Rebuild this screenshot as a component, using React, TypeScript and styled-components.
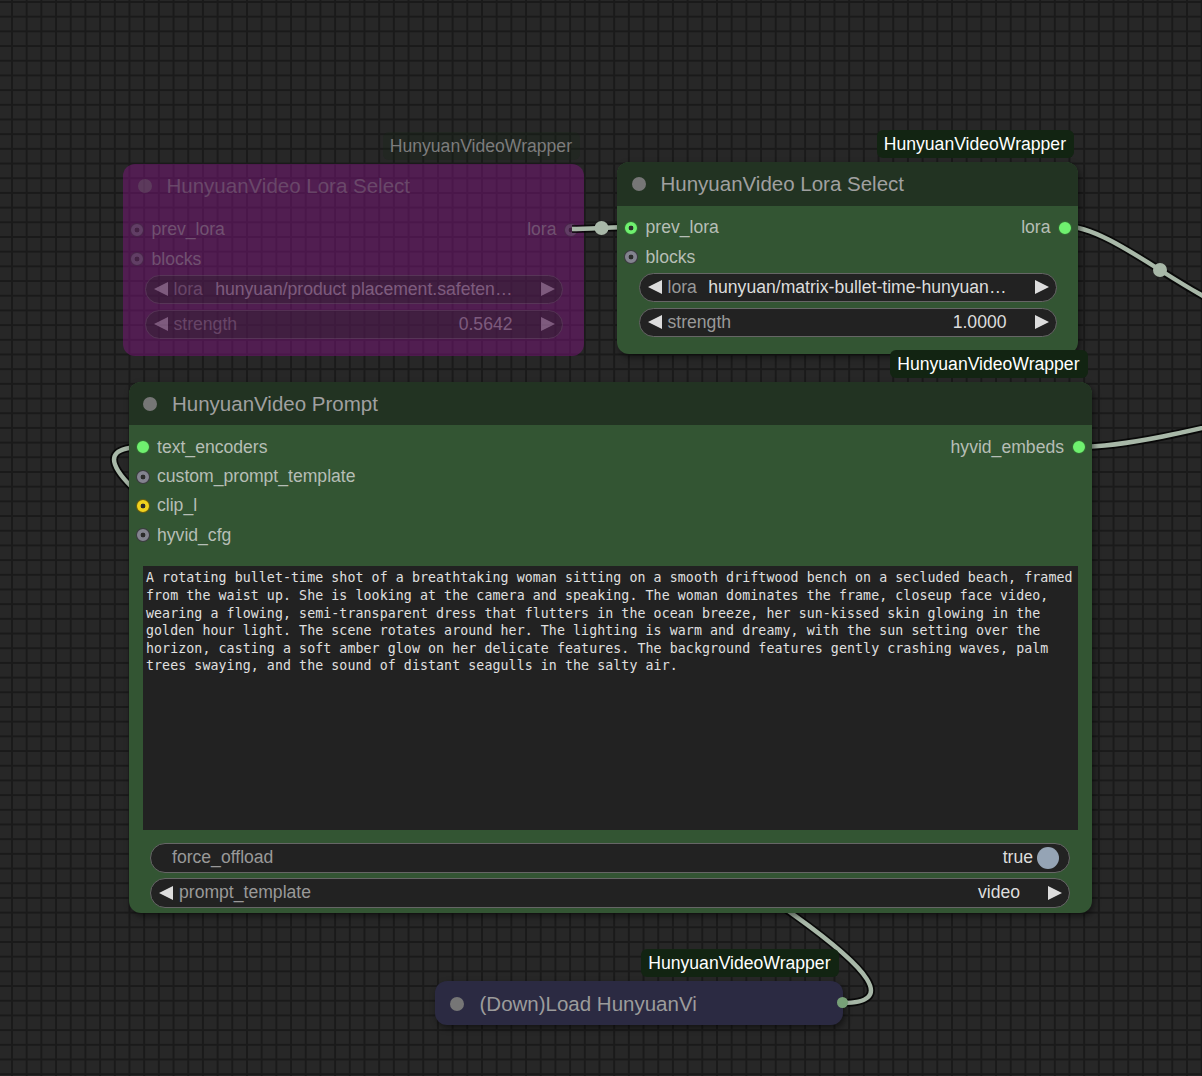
import React from 'react';
import styled, { createGlobalStyle } from 'styled-components';

const GlobalStyle = createGlobalStyle`
  html, body {
    margin: 0;
    padding: 0;
    background: #262626;
    overflow: hidden;
  }
  body {
    font-family: "Liberation Sans", Arial, sans-serif;
  }
`;

const Canvas = styled.div`
  position: relative;
  width: 1202px;
  height: 1076px;
  overflow: hidden;
  background-color: #272727;
  background-image:
    linear-gradient(to right, #1a1a1a 0, #1a1a1a 2px, transparent 2px),
    linear-gradient(to bottom, #1a1a1a 0, #1a1a1a 2px, transparent 2px);
  background-size: 14.7px 14.7px;
  background-position: 11px 1px;
  font-family: "Liberation Sans", Arial, sans-serif;
`;

const Node = styled.div<{ $x: number; $y: number; $w: number; $bg: string; $shadow?: boolean }>`
  position: absolute;
  left: ${(p) => p.$x}px;
  top: ${(p) => p.$y}px;
  width: ${(p) => p.$w}px;
  background: ${(p) => p.$bg};
  border-radius: 12px;
  display: flex;
  flex-direction: column;
  box-shadow: ${(p) => (p.$shadow === false ? 'none' : '2px 3px 6px rgba(0, 0, 0, 0.5)')};
`;

const Faded = styled.div`
  display: flex;
  flex-direction: column;
  opacity: 0.32;
`;

const Badge = styled.div<{ $faded?: boolean }>`
  position: absolute;
  right: 4px;
  bottom: calc(100% + 4px);
  height: 28px;
  line-height: 28px;
  padding: 0 8px 0 7px;
  border-radius: 6px;
  background: ${(p) => (p.$faded ? 'rgba(19, 38, 19, 0.25)' : '#122412')};
  color: ${(p) => (p.$faded ? '#7c7c7c' : '#ffffff')};
  font-size: 17.6px;
  white-space: nowrap;
`;

const TitleBar = styled.div<{ $bg?: string }>`
  height: 43.5px;
  box-sizing: border-box;
  padding-top: 1px;
  display: flex;
  align-items: center;
  gap: 15px;
  padding-left: 14.5px;
  background: ${(p) => p.$bg ?? 'transparent'};
  border-radius: 12px 12px 0 0;
  font-size: 20.5px;
  color: #a0a0a0;
  white-space: nowrap;
`;

const CollapsedBar = styled(TitleBar)`
  height: 44px;
  border-radius: 12px;
  padding-left: 15px;
  gap: 15.5px;
  color: #9c9c9c;
`;

const TitleDot = styled.span`
  width: 14px;
  height: 14px;
  border-radius: 50%;
  background: #767676;
  flex: none;
`;

const SlotList = styled.div`
  display: flex;
  flex-direction: column;
  padding-top: 7.5px;
`;

const SlotRow = styled.div`
  height: 29.4px;
  display: flex;
  align-items: center;
  justify-content: space-between;
  padding: 0 6px 0 7px;
`;

const SlotSide = styled.div`
  display: flex;
  align-items: center;
  gap: 7.5px;
`;

const SlotLabel = styled.span`
  font-size: 17.6px;
  color: #b6beb6;
  white-space: nowrap;
`;

const SlotDot = styled.span<{ $color: string; $ring?: boolean }>`
  width: 14px;
  height: 14px;
  border-radius: 50%;
  flex: none;
  box-sizing: border-box;
  border: 1px solid rgba(0, 0, 0, 0.55);
  background: ${(p) =>
    p.$ring
      ? `radial-gradient(circle, #2c2c2c 0, #2c2c2c 2.1px, ${p.$color} 2.7px)`
      : p.$color};
`;

const WidgetList = styled.div<{ $top: number; $bottom: number }>`
  display: flex;
  flex-direction: column;
  gap: 5.6px;
  padding: ${(p) => p.$top}px 21.5px ${(p) => p.$bottom}px 21.5px;
`;

const Widget = styled.div`
  height: 29.4px;
  box-sizing: border-box;
  border: 1px solid #666;
  border-radius: 15px;
  background: #222;
  display: flex;
  align-items: center;
  padding: 0 7px 0 8px;
  font-size: 17.6px;
  white-space: nowrap;
`;

const ToggleWidget = styled(Widget)`
  padding: 0 10px 0 21px;
`;

const Arrow = styled.span<{ $dir: 'left' | 'right' }>`
  width: 0;
  height: 0;
  flex: none;
  border-top: 7.35px solid transparent;
  border-bottom: 7.35px solid transparent;
  ${(p) =>
    p.$dir === 'left' ? 'border-right: 14.7px solid #dddddd;' : 'border-left: 14.7px solid #dddddd;'}
`;

const WLabel = styled.span<{ $grow?: boolean }>`
  margin-left: ${(p) => (p.$grow ? '0' : '6px')};
  color: #999;
  flex: ${(p) => (p.$grow ? '1' : 'none')};
`;

const WValue = styled.span`
  flex: 1;
  text-align: right;
  color: #ddd;
  margin: 0 28px 0 9px;
  overflow: hidden;
  text-overflow: ellipsis;
`;

const ToggleValue = styled.span`
  color: #ddd;
  margin-right: 4px;
`;

const ToggleKnob = styled.span`
  width: 22px;
  height: 22px;
  border-radius: 50%;
  background: #95a4b5;
  flex: none;
`;

const PromptText = styled.div`
  margin: 15.9px 13.5px 0 14.5px;
  height: 264px;
  box-sizing: border-box;
  padding: 3.5px 3px 2px;
  background: #222;
  color: #e0e0e0;
  font-family: "DejaVu Sans Mono", "Liberation Mono", monospace;
  font-size: 13.25px;
  letter-spacing: 0.08px;
  line-height: 17.6px;
  white-space: pre;
  overflow: hidden;
`;

const OutputNub = styled.span`
  position: absolute;
  right: -5px;
  top: 50%;
  width: 11px;
  height: 11px;
  margin-top: -6px;
  border-radius: 50%;
  background: #77a077;
`;

const Wires = styled.svg`
  position: absolute;
  left: 0;
  top: 0;
  width: 1202px;
  height: 1076px;
  overflow: visible;
  pointer-events: none;
`;

const GREEN = '#6ff06f';
const GREY = '#83838f';
const YELLOW = '#f0d21e';
const WIRE = '#a8b8a8';

const prompt = [
  'A rotating bullet-time shot of a breathtaking woman sitting on a smooth driftwood bench on a secluded beach, framed',
  'from the waist up. She is looking at the camera and speaking. The woman dominates the frame, closeup face video,',
  'wearing a flowing, semi-transparent dress that flutters in the ocean breeze, her sun-kissed skin glowing in the',
  'golden hour light. The scene rotates around her. The lighting is warm and dreamy, with the sun setting over the',
  'horizon, casting a soft amber glow on her delicate features. The background features gently crashing waves, palm',
  'trees swaying, and the sound of distant seagulls in the salty air.',
].join('\n');

type ComboProps = { label: string; value: string };
const Combo: React.FC<ComboProps> = ({ label, value }) => (
  <Widget>
    <Arrow $dir="left" />
    <WLabel>{label}</WLabel>
    <WValue>{value}</WValue>
    <Arrow $dir="right" />
  </Widget>
);

const links = [
  { d: 'M572 229 C587 229, 616 227, 631 227', mid: [601.5, 228] as [number, number] },
  { d: 'M1064 226 C1117 226, 1203 314, 1256 314', mid: [1160, 270] as [number, number] },
  { d: 'M1078 447 C1172.5 447, 1355.5 380, 1450 380' },
  { d: 'M842 1003 C1065 1003, -80 447, 143 447' },
];

const LoraBody: React.FC<{ value: string; strength: string; prevColor: string }> = ({
  value,
  strength,
  prevColor,
}) => (
  <>
    <SlotList>
      <SlotRow>
        <SlotSide>
          <SlotDot $color={prevColor} $ring />
          <SlotLabel>prev_lora</SlotLabel>
        </SlotSide>
        <SlotSide>
          <SlotLabel>lora</SlotLabel>
          <SlotDot $color={prevColor === GREEN ? GREEN : GREY} $ring={prevColor !== GREEN} />
        </SlotSide>
      </SlotRow>
      <SlotRow>
        <SlotSide>
          <SlotDot $color={GREY} $ring />
          <SlotLabel>blocks</SlotLabel>
        </SlotSide>
      </SlotRow>
    </SlotList>
    <WidgetList $top={0.9} $bottom={17}>
      <Combo label="lora" value={value} />
      <Combo label="strength" value={strength} />
    </WidgetList>
  </>
);

export default function App() {
  return (
    <>
      <GlobalStyle />
      <Canvas>
        {/* bypassed lora select node */}
        <Node $x={123} $y={164} $w={461} $bg="rgba(140, 20, 140, 0.42)" $shadow={false}>
          <Badge $faded>HunyuanVideoWrapper</Badge>
          <Faded>
            <TitleBar>
              <TitleDot />
              HunyuanVideo Lora Select
            </TitleBar>
            <LoraBody
              value="hunyuan/product placement.safeten…"
              strength="0.5642"
              prevColor={GREY}
            />
          </Faded>
        </Node>

        <Wires viewBox="0 0 1202 1076">
          {links.map((l, i) => (
            <g key={i}>
              <path d={l.d} fill="none" stroke="rgba(0,0,0,0.75)" strokeWidth={8} />
              <path d={l.d} fill="none" stroke={WIRE} strokeWidth={4.4} />
              {l.mid && <circle cx={l.mid[0]} cy={l.mid[1]} r={7} fill={WIRE} />}
            </g>
          ))}
        </Wires>

        {/* active lora select node */}
        <Node $x={617} $y={162} $w={461} $bg="#335533">
          <Badge>HunyuanVideoWrapper</Badge>
          <TitleBar $bg="#223322">
            <TitleDot />
            HunyuanVideo Lora Select
          </TitleBar>
          <LoraBody
            value="hunyuan/matrix-bullet-time-hunyuan…"
            strength="1.0000"
            prevColor={GREEN}
          />
        </Node>

        {/* prompt node */}
        <Node $x={128.5} $y={381.5} $w={963} $bg="#335533">
          <Badge>HunyuanVideoWrapper</Badge>
          <TitleBar $bg="#223322">
            <TitleDot />
            HunyuanVideo Prompt
          </TitleBar>
          <SlotList>
            <SlotRow>
              <SlotSide>
                <SlotDot $color={GREEN} />
                <SlotLabel>text_encoders</SlotLabel>
              </SlotSide>
              <SlotSide>
                <SlotLabel>hyvid_embeds</SlotLabel>
                <SlotDot $color={GREEN} />
              </SlotSide>
            </SlotRow>
            <SlotRow>
              <SlotSide>
                <SlotDot $color={GREY} $ring />
                <SlotLabel>custom_prompt_template</SlotLabel>
              </SlotSide>
            </SlotRow>
            <SlotRow>
              <SlotSide>
                <SlotDot $color={YELLOW} $ring />
                <SlotLabel>clip_l</SlotLabel>
              </SlotSide>
            </SlotRow>
            <SlotRow>
              <SlotSide>
                <SlotDot $color={GREY} $ring />
                <SlotLabel>hyvid_cfg</SlotLabel>
              </SlotSide>
            </SlotRow>
          </SlotList>
          <PromptText>{prompt}</PromptText>
          <WidgetList $top={13.3} $bottom={5.6}>
            <ToggleWidget>
              <WLabel $grow>force_offload</WLabel>
              <ToggleValue>true</ToggleValue>
              <ToggleKnob />
            </ToggleWidget>
            <Combo label="prompt_template" value="video" />
          </WidgetList>
        </Node>

        {/* collapsed loader node */}
        <Node $x={435} $y={981} $w={407.5} $bg="#2b2a42">
          <Badge>HunyuanVideoWrapper</Badge>
          <CollapsedBar>
            <TitleDot />
            (Down)Load HunyuanVi
          </CollapsedBar>
          <OutputNub />
        </Node>
      </Canvas>
    </>
  );
}
